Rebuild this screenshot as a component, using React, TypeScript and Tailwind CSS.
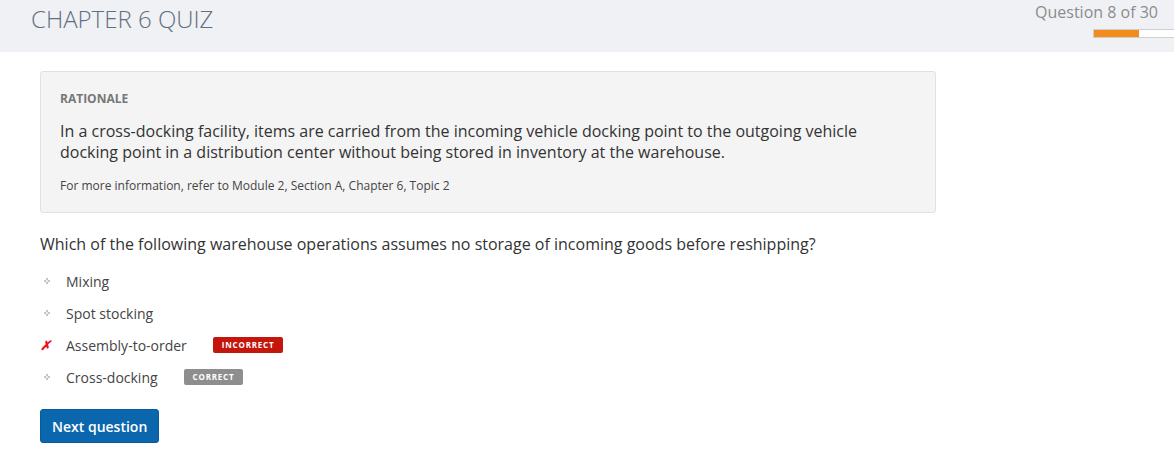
const options = [
  { label: "Mixing", mark: "dot" },
  { label: "Spot stocking", mark: "dot" },
  { label: "Assembly-to-order", mark: "x", badge: "INCORRECT" },
  { label: "Cross-docking", mark: "dot", badge: "CORRECT" },
];

function Bullet({ mark }: { mark: string }) {
  if (mark === "x") {
    return <span className="w-[26px] text-[13px] font-bold italic text-[#e8141b] leading-none">✗</span>;
  }
  return (
    <span className="w-[26px] flex items-center pl-[4px]">
      <svg width="6" height="6" viewBox="0 0 6 6">
        <rect x="2" y="0" width="2" height="2" fill="#c4c4c4" />
        <rect x="0" y="2" width="2" height="2" fill="#c4c4c4" />
        <rect x="4" y="2" width="2" height="2" fill="#c4c4c4" />
        <rect x="2" y="4" width="2" height="2" fill="#c4c4c4" />
        <rect x="2" y="2" width="2" height="2" fill="#ececec" />
      </svg>
    </span>
  );
}

export default function App() {
  return (
    <div className="w-[1174px] h-[459px] bg-white overflow-hidden font-['Open_Sans',sans-serif]">
      <header className="h-[52px] bg-[#eff1f5] flex justify-between pl-[31px]">
        <h1 className="text-[24px] font-light text-[#5f6f80] leading-none pt-[7px]">CHAPTER 6 QUIZ</h1>
        <div className="flex flex-col items-end pt-[2px] pr-[16px] w-[140px] overflow-visible">
          <span className="text-[16px] text-[#8c8c8c] leading-[20px]">Question 8 of 30</span>
          <div className="mt-[7px] self-start ml-[59px] w-[100px] h-[9px] bg-white border border-[#cfcfcf] shrink-0">
            <div className="h-full w-[45px] bg-[#f28c1c]" />
          </div>
        </div>
      </header>

      <main className="px-[40px] pt-[19px]">
        <section className="w-[896px] bg-[#f4f4f4] border border-[#e1e1e1] rounded-[3px] pl-[19px] pr-[20px] pt-[19px] pb-[18px]">
          <div className="text-[12px] font-bold text-[#777] leading-[16px]">RATIONALE</div>
          <p className="mt-[14px] text-[16px] text-[#333] leading-[21px]">
            In a cross-docking facility, items are carried from the incoming vehicle docking point to the outgoing vehicle
            <br />
            docking point in a distribution center without being stored in inventory at the warehouse.
          </p>
          <p className="mt-[15px] text-[12px] text-[#444] leading-[16px]">
            For more information, refer to Module 2, Section A, Chapter 6, Topic 2
          </p>
        </section>

        <p className="mt-[20px] text-[16px] text-[#333] leading-[22px]">
          Which of the following warehouse operations assumes no storage of incoming goods before reshipping?
        </p>

        <ul className="mt-[10px] flex flex-col">
          {options.map((o) => (
            <li key={o.label} className="h-[32px] flex items-center text-[14px] text-[#444]">
              <Bullet mark={o.mark} />
              <span>{o.label}</span>
              {o.badge && (
                <span
                  className={
                    "ml-[26px] h-[16px] px-[9px] flex items-center rounded-[2px] text-[8px] font-bold tracking-[0.8px] text-white " +
                    (o.badge === "INCORRECT" ? "bg-[#c4160c]" : "bg-[#8e8e8e]")
                  }
                >
                  {o.badge}
                </span>
              )}
            </li>
          ))}
        </ul>

        <button className="mt-[16px] h-[34px] px-[11px] bg-[#0b67ad] border border-[#0a5a98] rounded-[3px] text-[14px] font-semibold text-white">
          Next question
        </button>
      </main>
    </div>
  );
}
